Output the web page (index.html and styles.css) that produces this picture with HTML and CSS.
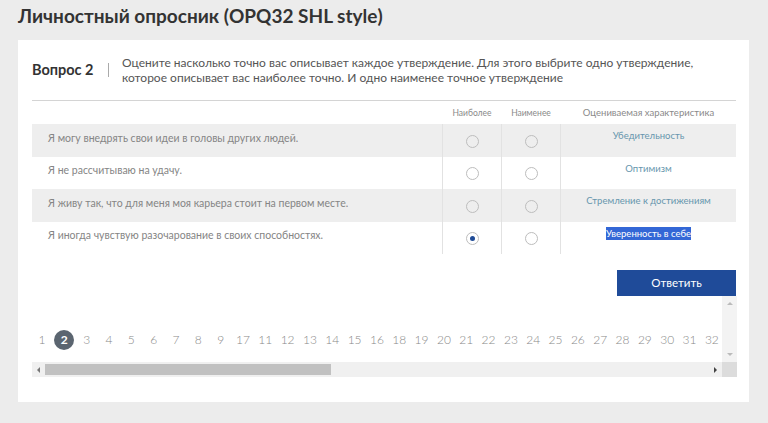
FILE: index.html
```html
<!DOCTYPE html>
<html lang="ru">
<head>
<meta charset="utf-8">
<title>Личностный опросник</title>
<link rel="stylesheet" href="styles.css">
</head>
<body>
<h1 class="title">Личностный опросник (OPQ32 SHL style)</h1>
<main class="card">
  <div class="question">
    <div class="q-label">Вопрос 2</div>
    <div class="q-sep"></div>
    <div class="q-text">Оцените насколько точно вас описывает каждое утверждение. Для этого выбрите одно утверждение, которое описывает вас наиболее точно. И одно наименее точное утверждение</div>
  </div>
  <div class="table">
    <div class="row head">
      <div class="c-text"></div>
      <div class="c-radio">Наиболее</div>
      <div class="c-radio">Наименее</div>
      <div class="c-trait">Оцениваемая характеристика</div>
    </div>
    <div class="row grey">
      <div class="c-text">Я могу внедрять свои идеи в головы других людей.</div>
      <div class="c-radio"><span class="radio"></span></div>
      <div class="c-radio"><span class="radio"></span></div>
      <div class="c-trait">Убедительность</div>
    </div>
    <div class="row">
      <div class="c-text">Я не рассчитываю на удачу.</div>
      <div class="c-radio"><span class="radio"></span></div>
      <div class="c-radio"><span class="radio"></span></div>
      <div class="c-trait">Оптимизм</div>
    </div>
    <div class="row grey">
      <div class="c-text">Я живу так, что для меня моя карьера стоит на первом месте.</div>
      <div class="c-radio"><span class="radio"></span></div>
      <div class="c-radio"><span class="radio"></span></div>
      <div class="c-trait">Стремление к достижениям</div>
    </div>
    <div class="row">
      <div class="c-text">Я иногда чувствую разочарование в своих способностях.</div>
      <div class="c-radio"><span class="radio checked"></span></div>
      <div class="c-radio"><span class="radio"></span></div>
      <div class="c-trait"><span class="selected">Уверенность в себе</span></div>
    </div>
  </div>
  <div class="actions"><button class="btn">Ответить</button></div>
  <div class="pager">
    <div class="pager-main">
      <div class="pages">
        <span class="pg">1</span><span class="pg active">2</span><span class="pg">3</span><span class="pg">4</span><span class="pg">5</span><span class="pg">6</span><span class="pg">7</span><span class="pg">8</span><span class="pg">9</span><span class="pg">17</span><span class="pg">11</span><span class="pg">12</span><span class="pg">13</span><span class="pg">14</span><span class="pg">15</span><span class="pg">16</span><span class="pg">18</span><span class="pg">19</span><span class="pg">20</span><span class="pg">21</span><span class="pg">22</span><span class="pg">23</span><span class="pg">24</span><span class="pg">25</span><span class="pg">26</span><span class="pg">27</span><span class="pg">28</span><span class="pg">29</span><span class="pg">30</span><span class="pg">31</span><span class="pg">32</span>
      </div>
      <div class="vbar">
        <span class="arr up"></span>
        <span class="arr down"></span>
      </div>
    </div>
    <div class="hbar">
      <span class="arr left"></span>
      <div class="track"><div class="thumb"></div></div>
      <span class="arr right"></span>
      <span class="corner"></span>
    </div>
  </div>
</main>
</body>
</html>
```

FILE: styles.css
```css
* { box-sizing: border-box; }
html, body { margin: 0; padding: 0; }
body {
  background: #ececec;
  font-family: Lato, "Open Sans", "Liberation Sans", sans-serif;
  width: 768px;
  height: 423px;
  overflow: hidden;
}
.title {
  margin: 0;
  height: 40px;
  padding: 4px 0 0 18px;
  font-size: 19px;
  font-weight: 700;
  color: #333;
}
.card {
  margin: 0 19px 0 18px;
  height: 362px;
  background: #fff;
  padding: 13px 13px 0 14px;
}
.question {
  display: flex;
  align-items: center;
  height: 33px;
  border-bottom: 1px solid #d4d4d4;
  box-sizing: content-box;
  padding-bottom: 14px;
}
.q-label {
  font-size: 14.5px;
  font-weight: 700;
  color: #333;
  width: 76px;
  flex: none;
}
.q-sep {
  width: 1px;
  height: 14px;
  background: #aaa;
  flex: none;
  margin-right: 13px;
}
.q-text {
  font-size: 12px;
  line-height: 15px;
  color: #555;
  font-weight: 400;
}
.table { font-size: 10px; }
.row {
  display: flex;
  height: 32.5px;
  background: #fff;
}
.row.grey { background: #eeeeee; }
.row.head { height: 23px; align-items: center; color: #8a8a8a; font-size: 8.5px; }
.c-text {
  width: 410px;
  padding-left: 16px;
  font-size: 10.5px;
  color: #858585;
  display: flex;
  align-items: center;
  padding-bottom: 5px;
}
.head .c-text { padding: 0; }
.c-radio {
  width: 59px;
  display: flex;
  align-items: center;
  justify-content: center;
  border-left: 1px solid #e2e2e2;
}
.c-trait {
  flex: 1;
  text-align: center;
  border-left: 1px solid #e2e2e2;
  color: #6796ad;
  padding-top: 6px;
  font-size: 9.5px;
}
.head .c-radio, .head .c-trait { border-left: 1px solid transparent; padding-top: 0; color: #8a8a8a; }
.row:not(.head) .c-radio { padding-top: 2px; }
.radio {
  width: 13px;
  height: 13px;
  border-radius: 50%;
  border: 1px solid #bdbdbd;
  background: #fff;
  display: inline-flex;
  align-items: center;
  justify-content: center;
}
.grey .radio { background: #eee; }
.radio.checked::after {
  content: "";
  width: 5px;
  height: 5px;
  border-radius: 50%;
  background: #1f4b96;
}
.selected {
  background: #3367d6;
  color: #fff;
  padding: 1px 0;
}
.actions {
  display: flex;
  justify-content: flex-end;
  padding-top: 16px;
}
.btn {
  width: 119px;
  height: 26px;
  border: 0;
  background: #1f4b99;
  color: #fff;
  font-family: inherit;
  font-size: 11.5px;
  padding: 0 0 1px;
}
.pager { width: 705px; }
.pager-main { display: flex; height: 66px; }
.pages {
  flex: 1;
  display: flex;
  align-items: center;
  gap: 2.33px;
  padding: 21px 0 0 0;
  overflow: hidden;
}
.pg {
  flex: none;
  width: 20px;
  height: 20px;
  border-radius: 50%;
  display: inline-flex;
  align-items: center;
  justify-content: center;
  font-size: 12px;
  color: #888;
  font-weight: 300;
}
.pg.active { background: #5b6570; color: #fff; font-weight: 700; }
.vbar {
  width: 15px;
  background: #f3f3f3;
  display: flex;
  flex-direction: column;
  justify-content: space-between;
  align-items: center;
  padding: 6px 0 6px;
}
.arr { width: 0; height: 0; display: block; }
.arr.up { border: 3px solid transparent; border-top: 0; border-bottom: 3px solid #bbb; }
.arr.down { border: 3px solid transparent; border-bottom: 0; border-top: 3px solid #bbb; }
.hbar {
  display: flex;
  height: 15px;
  background: #f0f0f0;
  align-items: center;
}
.arr.left { border: 3px solid transparent; border-left: 0; border-right: 3px solid #777; margin: 0 5px 0 5px; }
.arr.right { border: 3px solid transparent; border-right: 0; border-left: 3px solid #444; margin: 0 5px 0 5px; }
.track { flex: 1; height: 15px; padding: 2px 0; }
.thumb { width: 286px; height: 11px; background: #c1c1c1; }
.corner { width: 15px; height: 15px; background: #dcdcdc; }
```
